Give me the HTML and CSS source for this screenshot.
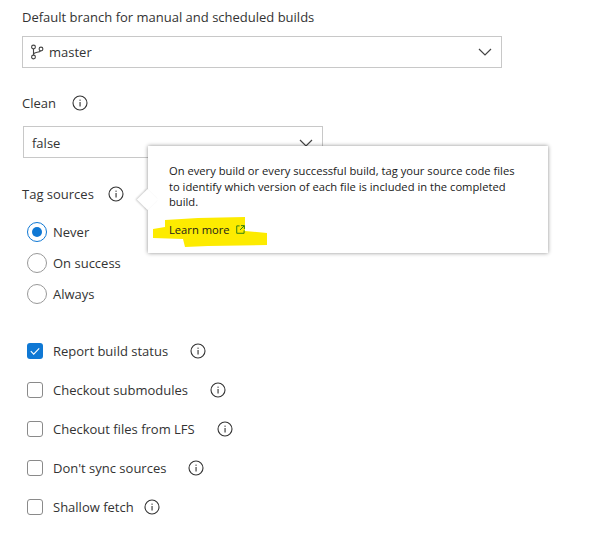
FILE: index.html
```html
<!DOCTYPE html>
<html lang="en">
<head>
    <meta charset="UTF-8">
    <title>Build settings</title>
    <link rel="stylesheet" href="styles.css">
</head>
<body>

<svg width="0" height="0" class="icon-defs">
    <symbol id="info" viewBox="0 0 16 16">
        <circle cx="8" cy="8" r="7" fill="none" stroke="#333" stroke-width="1.1"/>
        <rect x="7.5" y="7" width="1.1" height="4.5" fill="#333"/>
        <rect x="7.5" y="4.6" width="1.1" height="1.2" fill="#333"/>
    </symbol>
</svg>

<main class="settings">
    <div class="field-label">Default branch for manual and scheduled builds</div>
    <div class="select select-wide">
        <svg class="branch-icon" width="14" height="16" viewBox="0 0 14 16">
            <g fill="none" stroke="#444" stroke-width="1.1">
                <circle cx="3.5" cy="3" r="1.9"/>
                <circle cx="3.5" cy="13" r="1.9"/>
                <circle cx="11" cy="5" r="1.9"/>
                <path d="M3.5 5v6M3.5 10.5c0-3 6-1.5 7-3.6"/>
            </g>
        </svg>
        <span class="select-value">master</span>
        <svg class="chevron" width="14" height="8" viewBox="0 0 14 8"><path d="M1 1l6 6 6-6" fill="none" stroke="#444" stroke-width="1.2"/></svg>
    </div>

    <div class="field-label label-clean"><span>Clean</span><svg class="info info-label" width="16" height="16"><use href="#info"/></svg></div>
    <div class="select select-narrow">
        <span class="select-value">false</span>
        <svg class="chevron" width="14" height="8" viewBox="0 0 14 8"><path d="M1 1l6 6 6-6" fill="none" stroke="#444" stroke-width="1.2"/></svg>
    </div>

    <div class="field-label label-tag"><span>Tag sources</span><svg class="info info-tag" width="16" height="16"><use href="#info"/></svg></div>

    <div class="radios">
        <div class="radio-row"><span class="radio radio-on"></span><span>Never</span></div>
        <div class="radio-row"><span class="radio"></span><span>On success</span></div>
        <div class="radio-row"><span class="radio"></span><span>Always</span></div>
    </div>

    <div class="checks">
        <div class="check-row">
            <span class="check check-on"><svg width="16" height="16" viewBox="0 0 16 16"><path d="M3.8 8.2l2.9 2.9 5.5-5.8" fill="none" stroke="#fff" stroke-width="1.1"/></svg></span>
            <span>Report build status</span>
            <svg class="info info-row" width="16" height="16"><use href="#info"/></svg>
        </div>
        <div class="check-row"><span class="check"></span><span>Checkout submodules</span><svg class="info info-row" width="16" height="16"><use href="#info"/></svg></div>
        <div class="check-row"><span class="check"></span><span>Checkout files from LFS</span><svg class="info info-row" width="16" height="16"><use href="#info"/></svg></div>
        <div class="check-row"><span class="check"></span><span>Don't sync sources</span><svg class="info info-row" width="16" height="16"><use href="#info"/></svg></div>
        <div class="check-row"><span class="check"></span><span>Shallow fetch</span><svg class="info info-close" width="16" height="16"><use href="#info"/></svg></div>
    </div>
</main>

<!-- Callout for the Tag sources info icon -->
<div class="callout">
    <span class="callout-beak"></span>
    <svg class="marker" width="140" height="40" viewBox="0 0 140 40">
        <path d="M17 9 L50 7 L97 6 L97 20 L119 22 L119 34 L60 35 L37 36 L35 28 L5 27 L5 18 L17 16 Z" fill="#fdeb00"/>
    </svg>
    <p class="callout-text">On every build or every successful build, tag your source code files to identify which version of each file is included in the completed build.</p>
    <div class="callout-link">Learn more
        <svg class="external" width="9" height="9" viewBox="0 0 10 10"><path d="M4 1H.8v8.2H9V6M5.5.7h3.8v3.8M9.2.8L4.6 5.4" fill="none" stroke="#2e7d10" stroke-width="1.1"/></svg>
    </div>
</div>

</body>
</html>
```

FILE: styles.css
```css
body {
    font-family: "Open Sans", "Noto Sans", Arial, sans-serif;
    font-size: 13px;
    color: #333333;
    background-color: #ffffff;
    margin: 0;
    padding: 0;
}
.icon-defs {
    display: block;
}
.settings {
    padding: 8px 0 0 22px;
}
.field-label {
    display: flex;
    align-items: center;
    height: 18px;
    line-height: 18px;
}
.select {
    display: flex;
    align-items: center;
    height: 30px;
    border: 1px solid #c8c8c8;
}
.select-wide {
    width: 478px;
    margin-top: 10px;
}
.select-narrow {
    width: 298px;
    margin: 14px 0 0 1px;
    padding-top: 1px;
    height: 29px;
}
.branch-icon {
    margin: 0 -3px 0 7px;
}
.select-value {
    margin-left: 8px;
    flex: 1;
}
.chevron {
    margin-right: 9px;
}
.label-clean {
    margin-top: 26px;
}
.label-tag {
    margin-top: 27px;
}
.info {
    flex: none;
}
.info-label {
    margin-left: 16px;
}
.info-tag {
    margin-left: 14px;
}
.radios {
    margin-top: 13px;
    padding-left: 5px;
}
.radio-row {
    display: flex;
    align-items: center;
    height: 31px;
}
.radio {
    width: 18px;
    height: 18px;
    border: 1px solid #999999;
    border-radius: 50%;
    margin-right: 6px;
    position: relative;
}
.radio-on {
    border-color: #0f78d4;
}
.radio-on::after {
    content: "";
    position: absolute;
    left: 4px;
    top: 4px;
    width: 10px;
    height: 10px;
    border-radius: 50%;
    background-color: #0f78d4;
}
.checks {
    margin-top: 22px;
    padding-left: 5px;
}
.check-row {
    display: flex;
    align-items: center;
    height: 39px;
}
.check {
    width: 14px;
    height: 14px;
    border: 1px solid #8a8a8a;
    border-radius: 3px;
    margin-right: 10px;
}
.check-on {
    width: 16px;
    height: 16px;
    border: none;
    background-color: #0f78d4;
}
.check-on svg {
    display: block;
}
.info-row {
    margin-left: 22px;
}
.info-close {
    margin-left: 10px;
}
.callout {
    position: absolute;
    left: 148px;
    top: 146px;
    width: 400px;
    height: 107px;
    box-sizing: border-box;
    background-color: #ffffff;
    box-shadow: 0 0 4px rgba(0, 0, 0, 0.45);
    padding: 17px 28px 0 21px;
    font-size: 11.2px;
    line-height: 15.6px;
    color: #1a1a1a;
}
.callout-beak {
    position: absolute;
    left: -8px;
    top: 46px;
    width: 15px;
    height: 15px;
    background-color: #ffffff;
    transform: rotate(45deg);
    box-shadow: -1px 1px 2px rgba(0, 0, 0, 0.2);
}
.marker {
    position: absolute;
    left: 0;
    top: 65px;
}
.callout-text {
    margin: 0;
    position: relative;
}
.callout-link {
    position: relative;
    margin-top: 12px;
    display: flex;
    align-items: center;
    gap: 6px;
}
```
